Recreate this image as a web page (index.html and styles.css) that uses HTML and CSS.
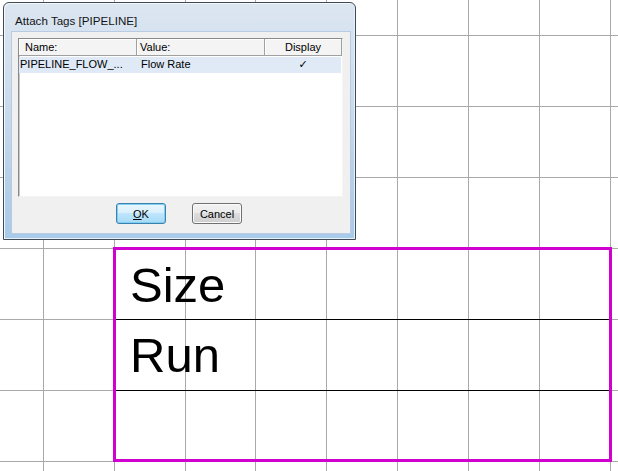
FILE: index.html
```html
<!DOCTYPE html>
<html>
<head>
<meta charset="utf-8">
<link rel="stylesheet" href="styles.css">
</head>
<body>
<div class="desk">
  <svg class="grid" width="618" height="471" viewBox="0 0 618 471" shape-rendering="crispEdges">
    <g stroke="#a9a9a9" stroke-width="1">
      <line x1="43.5" y1="0" x2="43.5" y2="471"/>
      <line x1="114.5" y1="0" x2="114.5" y2="471"/>
      <line x1="185.5" y1="0" x2="185.5" y2="471"/>
      <line x1="255.5" y1="0" x2="255.5" y2="471"/>
      <line x1="326.5" y1="0" x2="326.5" y2="471"/>
      <line x1="397.5" y1="0" x2="397.5" y2="471"/>
      <line x1="468.5" y1="0" x2="468.5" y2="471"/>
      <line x1="539.5" y1="0" x2="539.5" y2="471"/>
      <line x1="610.5" y1="0" x2="610.5" y2="471"/>
      <line x1="0" y1="35.5" x2="618" y2="35.5"/>
      <line x1="0" y1="106.5" x2="618" y2="106.5"/>
      <line x1="0" y1="177.5" x2="618" y2="177.5"/>
      <line x1="0" y1="248.5" x2="618" y2="248.5"/>
      <line x1="0" y1="319.5" x2="618" y2="319.5"/>
      <line x1="0" y1="390.5" x2="618" y2="390.5"/>
      <line x1="0" y1="461.5" x2="618" y2="461.5"/>
    </g>
  </svg>

  <div class="tagtable">
    <div class="trow r1">Size</div>
    <div class="trow r2">Run</div>
    <div class="trow r3"></div>
  </div>

  <div class="dialog">
    <div class="titlebar">Attach Tags [PIPELINE]</div>
    <div class="client">
      <div class="list">
        <div class="lhead">
          <div class="hc c1 hname">Name:</div>
          <div class="hc c2 hval">Value:</div>
          <div class="hc c3 hdisp">Display</div>
        </div>
        <div class="lrow">
          <div class="rc c1 rname">PIPELINE_FLOW_...</div>
          <div class="rc c2 rval">Flow Rate</div>
          <div class="rc c3 rdisp">✓</div>
        </div>
      </div>
      <div class="buttons">
        <button class="btn default"><u>O</u>K</button>
        <button class="btn">Cancel</button>
      </div>
    </div>
  </div>
</div>
</body>
</html>
```

FILE: styles.css
```css
* { box-sizing: border-box; }
html, body { margin: 0; padding: 0; background: #ffffff; }
.desk {
  position: relative;
  width: 618px;
  height: 471px;
  overflow: hidden;
  background: #ffffff;
  font-family: "Liberation Sans", Arial, sans-serif;
}
.grid { position: absolute; left: 0; top: 0; }

.tagtable {
  position: absolute;
  left: 113px;
  top: 247px;
  width: 499px;
  height: 215px;
  border: 3px solid #d000d0;
  display: flex;
  flex-direction: column;
}
.trow {
  font-family: "Liberation Sans", Arial, sans-serif;
  font-size: 49px;
  line-height: 50px;
  color: #000;
  padding-left: 14px;
  padding-top: 10px;
}
.r1 { height: 70px; border-bottom: 1px solid #000; }
.r2 { height: 71px; border-bottom: 1px solid #000; }
.r3 { flex: 1; }

.dialog {
  position: absolute;
  left: 3px;
  top: 2px;
  width: 353px;
  height: 238px;
  border: 1px solid #3f4a55;
  border-radius: 6px 6px 0 0;
  background: linear-gradient(to bottom, #dce6f1 0%, #c9daed 45%, #b2cee9 80%, #a8caea 100%);
  box-shadow: inset 1px 1px 0 #f4f8fc, inset -1px -1px 0 #e6f0fa;
  padding: 0 4px 5px 7px;
  display: flex;
  flex-direction: column;
}
.titlebar {
  height: 28px;
  padding: 11px 0 0 4px;
  font-size: 11.6px;
  line-height: 14px;
  color: #141414;
  white-space: nowrap;
}
.client {
  flex: 1;
  background: #f0f0f0;
  border: 1px solid #b9cbe0;
  padding: 6px 7px 0 6px;
  display: flex;
  flex-direction: column;
}
.list {
  height: 159px;
  background: #ffffff;
  border: 1px solid;
  border-color: #8a8a8a #f4f4f4 #f4f4f4 #8a8a8a;
  box-shadow: inset 1px 1px 0 #c8c8c8;
  font-size: 11px;
  color: #000;
}
.lhead {
  display: flex;
  height: 17px;
  background: #f4f4f4;
}
.hc {
  line-height: 16px;
  border-bottom: 1px solid #a0a0a0;
  border-right: 1px solid #a0a0a0;
  box-shadow: inset 1px 1px 0 #ffffff;
  white-space: nowrap;
}
.c1 { width: 118px; }
.c2 { width: 128px; }
.c3 { width: 77px; text-align: center; }
.hname { padding-left: 6px; }
.hval { padding-left: 3px; }
.lrow {
  display: flex;
  height: 16px;
  margin-top: 1px;
  background: #dfeaf6;
  width: 322px;
}
.rc {
  line-height: 15px;
  white-space: nowrap;
}
.rname { padding-left: 1px; }
.rval { padding-left: 4px; }
.rdisp { width: 76px; font-family: "DejaVu Sans", sans-serif; font-size: 11px; }

.buttons {
  display: flex;
  justify-content: center;
  gap: 26px;
  margin-top: 6px;
  padding-right: 3px;
}
.btn {
  width: 50px;
  height: 21px;
  padding: 0;
  font-family: "Liberation Sans", Arial, sans-serif;
  font-size: 11px;
  color: #000;
  border: 1px solid #707070;
  border-radius: 3px;
  background: linear-gradient(to bottom, #f2f2f2 0%, #ebebeb 45%, #dddddd 50%, #cfcfcf 100%);
  box-shadow: inset 0 0 0 1px #fbfbfb;
}
.btn u { text-decoration: underline; }
.btn.default {
  border-color: #3c7fb1;
  box-shadow: inset 0 0 0 1px #7fd0ef;
  background: linear-gradient(to bottom, #eaf6fd 0%, #d9f0fc 45%, #bee6fd 50%, #a7d9f5 100%);
}
```
